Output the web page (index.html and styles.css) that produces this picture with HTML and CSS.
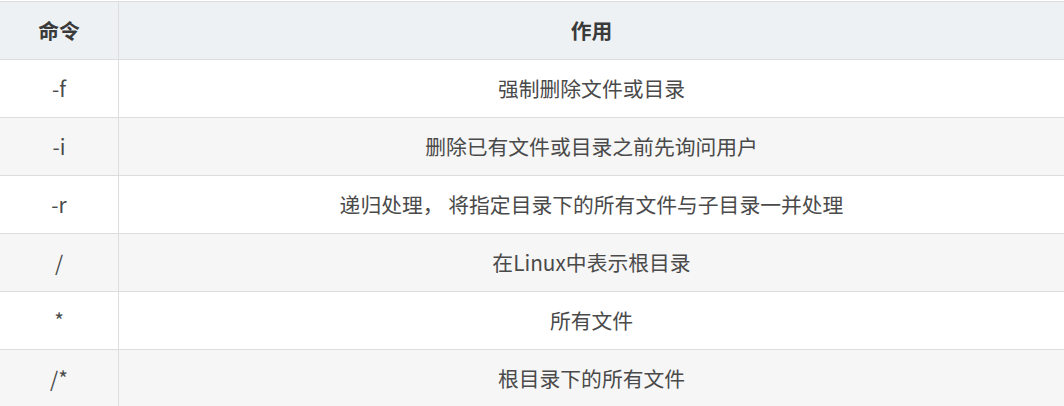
FILE: index.html
```html
<!DOCTYPE html>
<html lang="zh">
<head>
<meta charset="utf-8">
<link rel="stylesheet" href="styles.css">
</head>
<body>
<div class="table">
  <div class="row head"><div class="cell c1">命令</div><div class="cell">作用</div></div>
  <div class="row"><div class="cell c1">-f</div><div class="cell">强制删除文件或目录</div></div>
  <div class="row alt"><div class="cell c1">-i</div><div class="cell">删除已有文件或目录之前先询问用户</div></div>
  <div class="row"><div class="cell c1">-r</div><div class="cell">递归处理， 将指定目录下的所有文件与子目录一并处理</div></div>
  <div class="row alt"><div class="cell c1">/</div><div class="cell">在Linux中表示根目录</div></div>
  <div class="row"><div class="cell c1">*</div><div class="cell">所有文件</div></div>
  <div class="row alt"><div class="cell c1">/*</div><div class="cell">根目录下的所有文件</div></div>
</div>
</body>
</html>
```
FILE: styles.css
```css
html, body {
  margin: 0;
  padding: 0;
  background: #fff;
}
body {
  padding-top: 1px;
  font-family: "Microsoft YaHei", "Noto Sans CJK SC", "Noto Sans", sans-serif;
  font-size: 20.8px;
  color: #4a4a4a;
}
.table {
  width: 1064px;
}
.row {
  display: grid;
  grid-template-columns: 119px 1fr;
  height: 58px;
  box-sizing: border-box;
  border-bottom: 1px solid #dddddd;
}
.row.head {
  height: 59px;
  border-top: 1px solid #dddddd;
  background: #eef1f4;
  font-weight: bold;
  color: #3a3a3a;
}
.row.alt {
  background: #f6f6f6;
}
.cell {
  display: flex;
  align-items: center;
  justify-content: center;
  white-space: nowrap;
  padding-bottom: 2px;
  box-sizing: border-box;
}
.c1 {
  border-right: 1px solid #dddddd;
}
```
